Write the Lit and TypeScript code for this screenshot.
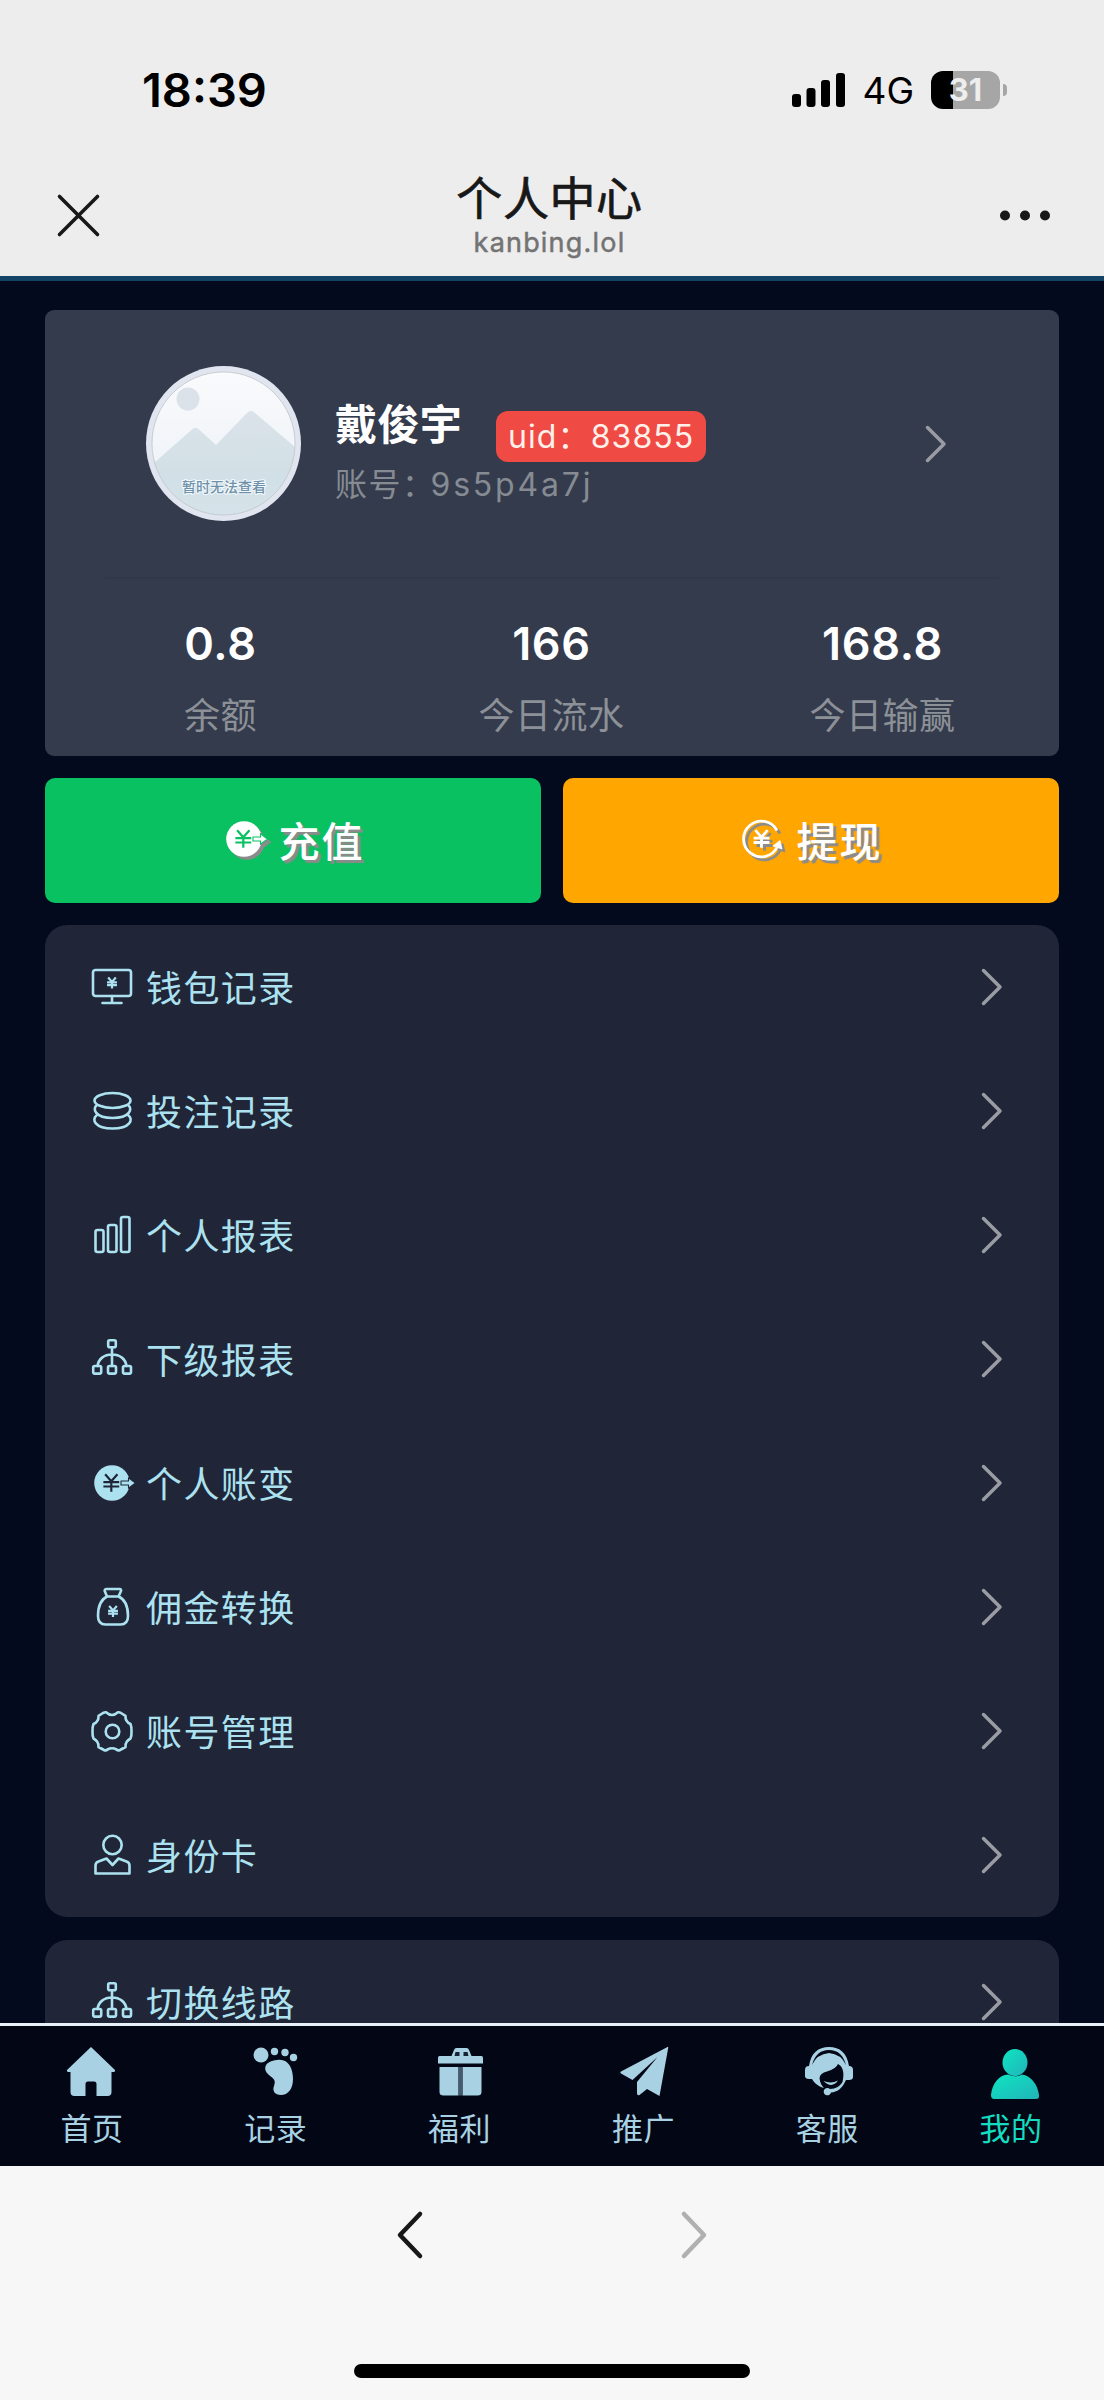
import { LitElement, html, css, svg } from "lit";
import { customElement } from "lit/decorators.js";

const yen = (cx: number, cy: number, s: number, w: number) => svg`
  <path fill="none" stroke-width=${w} stroke-linecap="butt"
    d="M${cx - s * 0.7} ${cy - s} L${cx} ${cy - s * 0.2} L${cx + s * 0.7} ${cy - s} M${cx} ${cy - s * 0.2} V${cy + s} M${cx - s * 0.9} ${cy - s * 0.1} H${cx + s * 0.9} M${cx - s * 0.9} ${cy + s * 0.4} H${cx + s * 0.9}"/>`;

const tree = svg`
  <rect x="16.2" y="1.2" width="7.6" height="7" rx="1.5"/>
  <rect x="1.2" y="27" width="8" height="7.6" rx="1.5"/>
  <rect x="16" y="27" width="8" height="7.6" rx="1.5"/>
  <rect x="31" y="27" width="8" height="7.6" rx="1.5"/>
  <path d="M20 8.500V27M5.500 27C6.500 20 12 15.500 20 15.500S33.500 20 34.500 27"/>`;

const coin = (ink: string) => svg`
  <circle cx="20" cy="20" r="17.800" fill="currentColor" stroke="none"/>
  <g stroke=${ink}>${yen(19.300, 20, 8.800, 2.200)}</g>
  <path d="M29 18H36.500V14.800L43.500 20L36.500 25.200V22H29Z" fill="currentColor" stroke=${ink} stroke-width="1.100"/>`;

const icons: Record<string, unknown> = {
  monitor: svg`<rect x="1" y="3" width="38" height="26" rx="2.500"/><path d="M20 29V35.500M10.500 36H29.500"/>${yen(20, 16, 5.500, 2.200)}`,
  coins: svg`<ellipse cx="20.500" cy="9.500" rx="18" ry="7.500"/>
    <path d="M4.500 14.500C.5 17.500 2.500 27 20.500 27S40.500 17.500 36.500 14.500M4.500 24.500C-.5 28 2.500 37.500 20.500 37.500S41.500 28 36.500 24.500"/>`,
  bars: svg`<rect x="3.500" y="15" width="8" height="22" rx="2"/><rect x="16" y="10" width="8.500" height="27" rx="2"/><rect x="29" y="2" width="8.500" height="35" rx="2"/>`,
  tree,
  coin: coin("#202538"),
  bag: svg`<path d="M15 9.500L12.700 4Q12.500 2 14.500 2H27.500Q29.500 2 29 4L26.500 9.500M15 9.500H26.500M15 9.500C8 13 6 22 6 29Q6 37.500 13.500 37.500H28.500Q36 37.500 36 29C36 22 34.500 13 26.500 9.500"/>${yen(21, 24.500, 5.500, 2.200)}`,
  gear: svg`<circle cx="20.500" cy="20.500" r="6.800"/>
    <path d="M14 1.300Q17 4 20 4T26 1.300Q27.500 1 29 2L33.500 4.800Q33 10.500 38.500 13Q39.700 16 39.500 20.500Q39.700 25 38.500 27.500Q33 30.500 33.500 36L28 39Q26 40 24.500 38.500Q20 36 15.500 38.500Q14 40 12 39L6.500 36Q7 30.500 1.500 27.500Q.3 25 .5 20.500Q.3 16 1.500 13Q7 10.500 6.500 4.800L11 2Q13 1 14 1.300Z"/>`,
  person: svg`<circle cx="20.500" cy="10" r="9.200"/><path d="M14.500 23.500L20.500 30L26.500 23.500L34.500 26.500Q37.500 27.500 37.500 30.500V38.500H3.500V30.500Q3.500 27.500 6.500 26.500Z"/>`,
};

const menu: [string, string][] = [
  ["monitor", "钱包记录"],
  ["coins", "投注记录"],
  ["bars", "个人报表"],
  ["tree", "下级报表"],
  ["coin", "个人账变"],
  ["bag", "佣金转换"],
  ["gear", "账号管理"],
  ["person", "身份卡"],
];

const tabs: [string, unknown][] = [
  ["首页", svg`<path d="M24 1L48 24Q48.500 26 46 26H44.500V46Q44.500 50 40.500 50H29.500V38Q29.500 35.500 27 35.500H21Q18.500 35.500 18.500 38V50H7.500Q3.500 50 3.500 46V26H2Q-.5 26 0 24Z"/>`],
  ["记录", svg`<circle cx="10" cy="9" r="7.500"/><circle cx="23.500" cy="5.500" r="3.700"/><circle cx="34" cy="6.500" r="3.700"/><circle cx="42.500" cy="11.500" r="3.700"/>
    <path d="M26 14C37 12 42 22 42 33C42 43 37 49 30 49C24 49 21 45 23 40C25 34 23 33 18 29C11 23 14 15 26 14Z"/>`],
  ["福利", svg`<path d="M4.500 10H16.500L19 4Q19.500 2 21.500 2H31.500Q33.500 2 34 4L36.500 10H46.500Q48 10 48 12V17.500H3V12Q3 10 4.500 10Z"/><path d="M20.500 6H24.500V10H19.500ZM28.500 6H32.500L33.500 10H28.500Z" fill="#172333"/>
    <path d="M4.500 21H23.500V49.500H8.500Q4.500 49.500 4.500 46ZM27.500 21H46.500V46Q46.500 49.500 42.500 49.500H27.500Z"/><path d="M23.500 21H27.500V49.500H23.500Z" fill="#465b6d"/>`],
  ["推广", svg`<path d="M49.500 1Q50.500 0 50.200 2L41.500 50L29 43L21.500 49Q19 50 19 47V36L39.500 11L14.500 34L3 27.500Q1.500 26.500 3 25.500Z"/>`],
  ["客服", svg`<g transform="translate(2 0)"><path d="M5 20C7 7 14 1 25 1S43 7 45 20Q49 20 49 24V31Q49 34 45 34H42C38 43 33 46 27 46.500A3.700 3.700 0 1 1 26 43C32 43 36 40 38.500 36C41 25 38 20 34 18Q32 23 23 25.500Q16 27 15.500 32C16 37 18 40 20 42C13 40 10 36 8 33H5Q1 33 1 30V24Q1 20 5 20ZM8 19Q13 8 25 7Q37 8 42 19Q38 4 25 4Q12 4 8 19Z" fill-rule="evenodd"/>
    <path d="M19.500 35Q27 38 34 34.500Q28 43 19.500 35Z"/></g>`],
  ["我的", svg`<defs><linearGradient id="g" x1="0" y1="0" x2="1" y2="1"><stop offset="0" stop-color="#0de6c2"/><stop offset="1" stop-color="#22b3b8"/></linearGradient></defs>
    <g transform="translate(2 0)"><ellipse cx="27" cy="16.500" rx="12.500" ry="13.500" fill="url(#g)"/><path d="M3 49C4 38 11 29 20 28.500Q27 32 34 28.500C43 30 49.500 38 51 49Q51.500 53 48 53H6Q3 53 3 49Z" fill="url(#g)"/></g>`],
];

const chevron = html`<svg class="chev" viewBox="0 0 20 36" width="20" height="36"><path d="M1.500 1.500L18 18L1.500 34.500"/></svg>`;

@customElement("app-root")
export class AppRoot extends LitElement {
  static styles = css`
    :host { display: flex; flex-direction: column; width: 1104px; height: 2400px; overflow: hidden; background: #040a1e;
      font-family: Inter, "Noto Sans CJK SC", sans-serif; }
    * { box-sizing: border-box; }
    svg { display: block; overflow: visible; flex: none; }
    .top { height: 281px; flex: none; background: #ededed; border-bottom: 5px solid #134467; display: flex; flex-direction: column; }
    .status { height: 150px; padding: 30px 97px 0 142px; display: flex; justify-content: space-between; align-items: center; color: #000; }
    .time { font-size: 47px; font-weight: 600; line-height: 60px; letter-spacing: 0; }
    .signals { display: flex; align-items: center; }
    .net { font-size: 37px; line-height: 40px; margin: 2px 17px 0 17px; letter-spacing: 0; }
    .batt { width: 69px; height: 38px; border-radius: 12px; background: linear-gradient(90deg, #000 22px, #a6a6a6 22px); color: #eee; font-size: 31px; font-weight: 700; line-height: 38px; text-align: center; }
    .nub { width: 4px; height: 12px; margin-left: 3px; border-radius: 0 4px 4px 0; background: #a6a6a6; }
    .bar { height: 126px; padding: 0 52px 0 57px; display: grid; grid-template-columns: 80px 1fr 80px; }
    .bar svg { margin-top: 44px; }
    .dots { justify-self: end; }
    .title { text-align: center; padding-right: 10px; }
    .title b { display: block; font: 400 46px/52px "Noto Sans CJK SC", sans-serif; color: #181818; margin-top: 19px; -webkit-text-stroke: 0.7px #181818; letter-spacing: 0.6px; }
    .title span { display: block; font-size: 27px; line-height: 32px; color: #737373; margin-top: 6px; letter-spacing: 1.2px; -webkit-text-stroke: 0.5px #737373; }
    .page { height: 1742px; flex: none; overflow: hidden; padding: 29px 45px 0; }
    .card { height: 446px; border-radius: 9px; background: #343b4c; }
    .profile { height: 269px; margin: 0 60px; padding: 56px 53px 0 41px; border-bottom: 2px solid #303747; display: flex; }
    .avatar { width: 155px; height: 155px; }
    .who { margin-left: 34px; padding-top: 30px; flex: 1; }
    .line { display: flex; }
    .name { font-size: 42px; font-weight: 700; line-height: 58px; color: #fff; white-space: nowrap; letter-spacing: 0.4px; }
    .uid { margin: 15px 0 0 34px; width: 210px; height: 51px; border-radius: 12px; background: #f04a45; color: #fff1e9; font-size: 32px; line-height: 51px; text-align: center; white-space: nowrap; letter-spacing: 1.100px; }
    .acct { margin-top: 1px; font-size: 32px; line-height: 44px; color: #868b93; letter-spacing: 1.500px; white-space: nowrap; }
    .acct span { margin-left: -5px; letter-spacing: 2.800px; }
    .profile .chev { margin-top: 60px; }
    .chev path { fill: none; stroke: #9a9ca4; stroke-width: 3.500; stroke-linecap: round; stroke-linejoin: round; }
    .stats { display: grid; grid-template-columns: repeat(3, 331px); margin-left: 10px; text-align: center; }
    .stat { color: #fff; font-size: 45px; font-weight: 600; line-height: 56px; padding-top: 37px; letter-spacing: 0.7px; }
    .stat span { display: block; font-size: 36px; font-weight: 400; line-height: 48px; color: #8c9097; margin-top: 20px; letter-spacing: 0.5px; }
    .actions { display: grid; grid-template-columns: 1fr 1fr; gap: 22px; margin-top: 22px; }
    .btn { height: 125px; padding: 0 0 3px 2px; border-radius: 10px; display: flex; align-items: center; justify-content: center; gap: 14px; color: #fff; font: 500 41px/60px "Noto Sans CJK SC", sans-serif; letter-spacing: 2px; text-shadow: 3px 3px 1px #8b8b8b; }
    .btn svg { filter: drop-shadow(3px 3px 0.500px #8b8b8b); }
    .go { background: #09c160; }
    .out { background: #ffa600; }
    .list { margin-top: 23px; border-radius: 22px; background: #202538; height: 992px; }
    .actions + .list { margin-top: 22px; }
    .row { height: 124px; padding: 0 57px 0 47px; display: flex; align-items: center; color: #ace2f0; font: 400 36px/52px "Noto Sans CJK SC", sans-serif; letter-spacing: 1.400px; }
    .row .ico { margin-right: 14px; fill: none; stroke: #ace2f0; stroke-width: 2.600; stroke-linejoin: round; stroke-linecap: round; color: #ace2f0; }
    .row span { padding-bottom: 3px; }
    .row .chev { margin-left: auto; }
    .nav { height: 143px; flex: none; border-top: 3px solid #e8f1fa; background: #030614; display: grid; grid-template-columns: repeat(6, 1fr); padding-right: 1px; }
    .tab { display: flex; flex-direction: column; align-items: center; color: #a8d2e3; fill: #a8d2e3; padding-top: 20px; font: 400 31px/44px "Noto Sans CJK SC", sans-serif; letter-spacing: 0.5px; }
    .tab span { margin-top: 9px; }
    .tab.on { color: #14dcc0; }
    .foot { flex: 1; background: #f7f7f7; display: flex; flex-direction: column; align-items: center; }
    .hist { margin-top: 46px; width: 308px; display: flex; justify-content: space-between; }
    .hist path { fill: none; stroke-width: 4.500; stroke-linecap: round; stroke-linejoin: round; }
    .home { flex: none; margin-top: 106px; width: 396px; height: 14px; border-radius: 7px; background: #000; }
  `;

  private avatar() {
    return html`<svg class="avatar" viewBox="0 0 155 155">
      <defs><clipPath id="c"><circle cx="77.500" cy="77.500" r="71.500"/></clipPath>
      <linearGradient id="m" x1="0" y1="0" x2="0" y2="1"><stop offset="0" stop-color="#dbe3e9"/><stop offset="0.600" stop-color="#d1e0e6"/><stop offset="1" stop-color="#d6e3ea"/></linearGradient>
      <linearGradient id="s" x1="0" y1="0" x2="0" y2="1"><stop offset="0" stop-color="#fafbfd"/><stop offset="1" stop-color="#eaeff5"/></linearGradient></defs>
      <circle cx="77.500" cy="77.500" r="77.500" fill="#e0e5ef"/>
      <g clip-path="url(#c)"><rect width="155" height="155" fill="url(#s)"/>
        <circle cx="42" cy="33" r="11.500" fill="#dbe2e9"/>
        <path d="M0 104L46 63.500Q49.500 60 53 63.500L70 79L101 47Q105 43 109 47L155 86V155H0Z" fill="url(#m)"/></g>
      <circle cx="77.500" cy="77.500" r="71.500" fill="none" stroke="#b9bec3" stroke-width="0.700"/>
      <text x="78" y="126" font-size="14" font-weight="500" text-anchor="middle" fill="#6f91aa" stroke="#f3f8fb" stroke-width="2" paint-order="stroke" font-family="Noto Sans CJK SC">暂时无法查看</text>
    </svg>`;
  }

  private row(icon: string, label: string) {
    return html`<div class="row"><svg class="ico" width="40" height="40" viewBox="0 0 40 40">${icons[icon]}</svg><span>${label}</span>${chevron}</div>`;
  }

  render() {
    return html`
      <header class="top">
        <div class="status">
          <div class="time">18:39</div>
          <div class="signals">
            <svg width="53" height="34"><rect y="21" width="9" height="13" rx="3"/><rect x="14.500" y="15" width="9" height="19" rx="3"/><rect x="29" y="7" width="9" height="27" rx="3"/><rect x="44" width="9" height="34" rx="3"/></svg>
            <span class="net">4G</span><span class="batt">31</span><span class="nub"></span>
          </div>
        </div>
        <div class="bar">
          <svg width="43" height="43" viewBox="0 0 43 43" fill="none" stroke="#181818" stroke-width="3.600" stroke-linecap="round"><path d="M2.500 2.500L40.500 40.500M40.500 2.500L2.500 40.500"/></svg>
          <div class="title"><b>个人中心</b><span>kanbing.lol</span></div>
          <svg class="dots" width="52" height="43" fill="#181818"><circle cx="5" cy="21.500" r="5"/><circle cx="25" cy="21.500" r="5"/><circle cx="45" cy="21.500" r="5"/></svg>
        </div>
      </header>
      <main class="page">
        <section class="card">
          <div class="profile">
            ${this.avatar()}
            <div class="who">
              <div class="line"><div class="name">戴俊宇</div><div class="uid">uid：83855</div></div>
              <div class="acct">账号：<span>9s5p4a7j</span></div>
            </div>
            ${chevron}
          </div>
          <div class="stats">
            <div class="stat">0.8<span>余额</span></div>
            <div class="stat">166<span>今日流水</span></div>
            <div class="stat">168.8<span>今日输赢</span></div>
          </div>
        </section>
        <div class="actions">
          <div class="btn go"><svg width="41" height="40" viewBox="0 0 41 40">${coin("#09c160")}</svg>充值</div>
          <div class="btn out"><svg width="41" height="40" viewBox="0 0 41 40" fill="none" stroke="#fff" stroke-width="2.800"><path d="M35 11.500A17.800 17.800 0 1 0 35.500 27.500"/><path d="M38 21.500L31 27L40 30Z" fill="#fff" stroke-width="0.800"/>${yen(19.500, 20, 8.800, 2.800)}</svg>提现</div>
        </div>
        <section class="list">${menu.map(([i, l]) => this.row(i, l))}</section>
        <section class="list">${this.row("tree", "切换线路")}</section>
      </main>
      <nav class="nav">
        ${tabs.map(([l, i], n) => html`<div class="tab ${n === 5 ? "on" : ""}"><svg width="50" height="50" viewBox="0 0 50 50">${i}</svg><span>${l}</span></div>`)}
      </nav>
      <footer class="foot">
        <div class="hist">
          <svg width="24" height="46" viewBox="0 0 24 46"><path stroke="#181818" d="M22 2L2 23L22 44"/></svg>
          <svg width="24" height="46" viewBox="0 0 24 46"><path stroke="#b0b0b0" d="M2 2L22 23L2 44"/></svg>
        </div>
        <div class="home"></div>
      </footer>`;
  }
}
